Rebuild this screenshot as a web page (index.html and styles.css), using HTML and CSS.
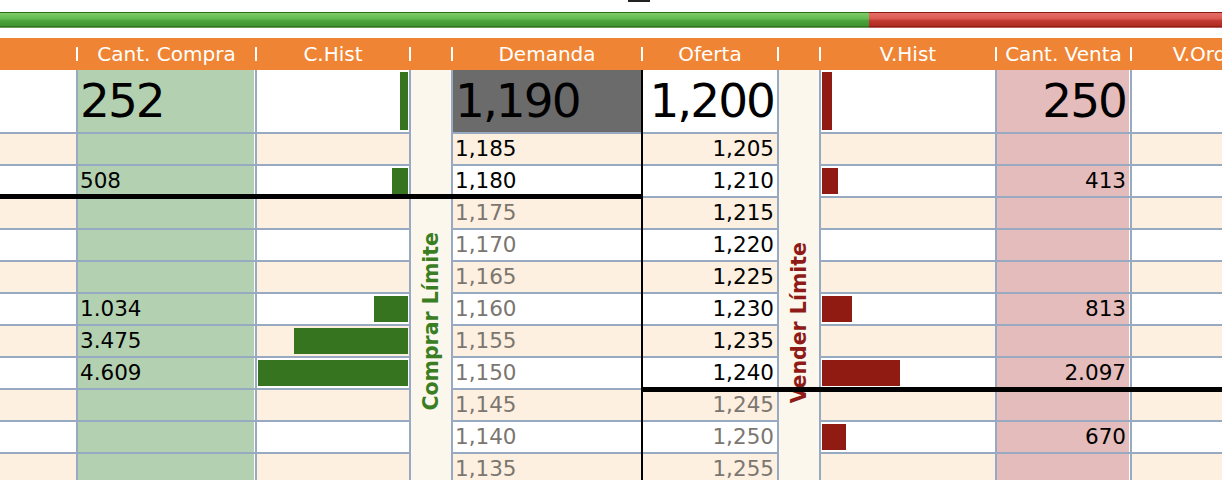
FILE: index.html
```html
<!DOCTYPE html>
<html lang="es">
<head>
  <meta charset="UTF-8">
  <meta name="viewport" content="width=device-width, initial-scale=1.0">
  <title>Ladder</title>
  <link rel="stylesheet" href="styles.css">
</head>
<body>

<div class="page">
  <div class="top"><div class="grip"></div></div>

  <div class="balance">
    <div class="buy-side"></div>
    <div class="sell-side"></div>
  </div>

  <div class="head">
    <div class="hcell w-blank"></div><div class="hsep"></div>
    <div class="hcell w-buy">Cant. Compra</div><div class="hsep"></div>
    <div class="hcell w-chist">C.Hist</div><div class="hsep"></div>
    <div class="hcell w-side"></div><div class="hsep"></div>
    <div class="hcell w-bid">Demanda</div><div class="hsep"></div>
    <div class="hcell w-ask">Oferta</div><div class="hsep"></div>
    <div class="hcell w-side"></div><div class="hsep"></div>
    <div class="hcell w-vhist">V.Hist</div><div class="hsep"></div>
    <div class="hcell w-sell">Cant. Venta</div><div class="hsep"></div>
    <div class="hcell w-order">V.Orden</div>
  </div>

  <div class="ladder">
    <!-- blank column -->
    <div class="col w-blank">
      <div class="cell big"></div>
      <div class="cell"></div><div class="cell"></div><div class="cell"></div>
      <div class="cell"></div><div class="cell"></div><div class="cell"></div>
      <div class="cell"></div><div class="cell"></div><div class="cell"></div>
      <div class="cell"></div><div class="cell"></div>
    </div>
    <div class="sep"></div>

    <!-- buy quantity -->
    <div class="col w-buy qty-buy">
      <div class="cell big">252</div>
      <div class="cell"></div>
      <div class="cell">508</div>
      <div class="cell"></div><div class="cell"></div><div class="cell"></div>
      <div class="cell">1.034</div>
      <div class="cell">3.475</div>
      <div class="cell">4.609</div>
      <div class="cell"></div><div class="cell"></div><div class="cell"></div>
    </div>
    <div class="sep"></div>

    <!-- buy history -->
    <div class="col w-chist hist-buy">
      <div class="cell big"><div class="bar" style="width: 8px"></div></div>
      <div class="cell"></div>
      <div class="cell"><div class="bar" style="width: 16px"></div></div>
      <div class="cell"></div><div class="cell"></div><div class="cell"></div>
      <div class="cell"><div class="bar" style="width: 34px"></div></div>
      <div class="cell"><div class="bar" style="width: 114px"></div></div>
      <div class="cell"><div class="bar" style="width: 150px"></div></div>
      <div class="cell"></div><div class="cell"></div><div class="cell"></div>
    </div>
    <div class="sep"></div>

    <div class="col-label w-side">
      <div class="label label-buy">Comprar Límite</div>
    </div>
    <div class="sep"></div>

    <!-- bid prices -->
    <div class="col w-bid prices">
      <div class="cell big current">1,190</div>
      <div class="cell">1,185</div>
      <div class="cell">1,180</div>
      <div class="cell past">1,175</div>
      <div class="cell past">1,170</div>
      <div class="cell past">1,165</div>
      <div class="cell past">1,160</div>
      <div class="cell past">1,155</div>
      <div class="cell past">1,150</div>
      <div class="cell past">1,145</div>
      <div class="cell past">1,140</div>
      <div class="cell past">1,135</div>
    </div>
    <div class="sep dark"></div>

    <!-- ask prices -->
    <div class="col w-ask prices right">
      <div class="cell big">1,200</div>
      <div class="cell">1,205</div>
      <div class="cell">1,210</div>
      <div class="cell">1,215</div>
      <div class="cell">1,220</div>
      <div class="cell">1,225</div>
      <div class="cell">1,230</div>
      <div class="cell">1,235</div>
      <div class="cell">1,240</div>
      <div class="cell past">1,245</div>
      <div class="cell past">1,250</div>
      <div class="cell past">1,255</div>
    </div>
    <div class="sep"></div>

    <div class="col-label w-side">
      <div class="label label-sell">Vender Límite</div>
    </div>
    <div class="sep"></div>

    <!-- sell history -->
    <div class="col w-vhist hist-sell">
      <div class="cell big"><div class="bar" style="width: 10px"></div></div>
      <div class="cell"></div>
      <div class="cell"><div class="bar" style="width: 16px"></div></div>
      <div class="cell"></div><div class="cell"></div><div class="cell"></div>
      <div class="cell"><div class="bar" style="width: 30px"></div></div>
      <div class="cell"></div>
      <div class="cell"><div class="bar" style="width: 78px"></div></div>
      <div class="cell"></div>
      <div class="cell"><div class="bar" style="width: 24px"></div></div>
      <div class="cell"></div>
    </div>
    <div class="sep"></div>

    <!-- sell quantity -->
    <div class="col w-sell qty-sell right">
      <div class="cell big">250</div>
      <div class="cell"></div>
      <div class="cell">413</div>
      <div class="cell"></div><div class="cell"></div><div class="cell"></div>
      <div class="cell">813</div>
      <div class="cell"></div>
      <div class="cell">2.097</div>
      <div class="cell"></div>
      <div class="cell">670</div>
      <div class="cell"></div>
    </div>
    <div class="sep"></div>

    <!-- orders -->
    <div class="col w-order">
      <div class="cell big"></div>
      <div class="cell"></div><div class="cell"></div><div class="cell"></div>
      <div class="cell"></div><div class="cell"></div><div class="cell"></div>
      <div class="cell"></div><div class="cell"></div><div class="cell"></div>
      <div class="cell"></div><div class="cell"></div>
    </div>

    <div class="cut cut-bid"></div>
    <div class="cut cut-ask"></div>
  </div>
</div>

</body>
</html>
```

FILE: styles.css
```css
body {
  margin: 0;
  padding: 0;
  background-color: white;
  font-family: "DejaVu Sans", sans-serif;
  overflow: hidden;
}
.page {
  width: 1222px;
  overflow: hidden;
}
.top {
  height: 12px;
}
.grip {
  width: 22px;
  height: 2px;
  margin-left: 628px;
  background-color: #222;
}

/* buy / sell balance bar */
.balance {
  display: flex;
  height: 16px;
}
.buy-side {
  width: 869px;
  flex: none;
  background: linear-gradient(#2f6d1f 0, #2f6d1f 1px, #7ccb69 1px, #66bd54 40%, #4aa43a 55%, #3f9530 85%, #2d6a1d 92%, #8cc47e 100%);
}
.sell-side {
  flex: 1;
  background: linear-gradient(#8b1c14 0, #8b1c14 1px, #e56d66 1px, #dc5b54 40%, #c0392f 55%, #b02d24 85%, #8a1a12 92%, #d98b86 100%);
}

/* header */
.head {
  display: flex;
  align-items: center;
  height: 32px;
  margin-top: 10px;
  background-color: #ef8534;
  color: white;
  font-size: 20px;
}
.hcell {
  flex: none;
  text-align: center;
  white-space: nowrap;
  line-height: 32px;
}
.hsep {
  flex: none;
  width: 2px;
  height: 14px;
  background-color: white;
}

/* column widths */
.w-blank { width: 76px; }
.w-buy { width: 177px; }
.w-chist { width: 152px; }
.w-side { width: 40px; }
.w-bid { width: 188px; }
.w-ask { width: 134px; }
.w-vhist { width: 174px; }
.w-sell { width: 133px; }
.w-order { width: 160px; }

/* ladder body */
.ladder {
  position: relative;
  display: flex;
  height: 420px;
}
.sep {
  flex: none;
  width: 2px;
  background-color: #98aac2;
}
.sep.dark {
  background-color: black;
}
.col {
  flex: none;
  display: flex;
  flex-direction: column;
  gap: 2px;
  background-color: #98aac2;
}
.cell {
  flex: none;
  height: 30px;
  line-height: 30px;
  padding: 0 2px;
  font-size: 21.5px;
  color: black;
  background-color: white;
  white-space: nowrap;
  overflow: hidden;
}
.cell:nth-child(even) {
  background-color: #fdf0e0;
}
.cell.big {
  height: 62px;
  line-height: 62px;
  font-size: 47px;
  letter-spacing: -2px;
}
.right .cell {
  text-align: right;
  padding-right: 4px;
}
.w-ask .cell {
  padding-right: 3px;
}
.cell.past {
  color: #7b7670;
}
.cell.current {
  background-color: #6b6b6b;
}

.qty-buy .cell,
.qty-buy .cell:nth-child(even) {
  background-color: #b3d1b0;
  box-shadow: inset -1px 0 white;
}
.qty-sell .cell,
.qty-sell .cell:nth-child(even) {
  background-color: #e3bcbb;
  box-shadow: inset -1px 0 white;
}

/* history bars */
.hist-buy .cell,
.hist-sell .cell {
  display: flex;
  align-items: center;
  padding: 0 1px;
}
.hist-buy .cell {
  justify-content: flex-end;
}
.bar {
  height: 26px;
}
.big .bar {
  height: 58px;
}
.hist-buy .bar {
  background-color: #36741f;
}
.hist-sell .bar {
  background-color: #901b13;
}

/* vertical order labels */
.col-label {
  flex: none;
  display: flex;
  flex-direction: column;
  align-items: center;
  background-color: #fcf7ec;
}
.label {
  writing-mode: vertical-rl;
  transform: rotate(180deg);
  font-weight: bold;
  font-size: 20.5px;
  line-height: 24px;
  white-space: nowrap;
}
.label-buy {
  margin-top: 162px;
  color: #3a7e23;
}
.label-sell {
  margin-top: 172px;
  color: #8e1b17;
}

/* last trade cut lines */
.cut {
  position: absolute;
  height: 5px;
  background-color: black;
}
.cut-bid {
  top: 124px;
  left: 0;
  width: 641px;
}
.cut-ask {
  top: 317px;
  left: 643px;
  right: 0;
}
```
